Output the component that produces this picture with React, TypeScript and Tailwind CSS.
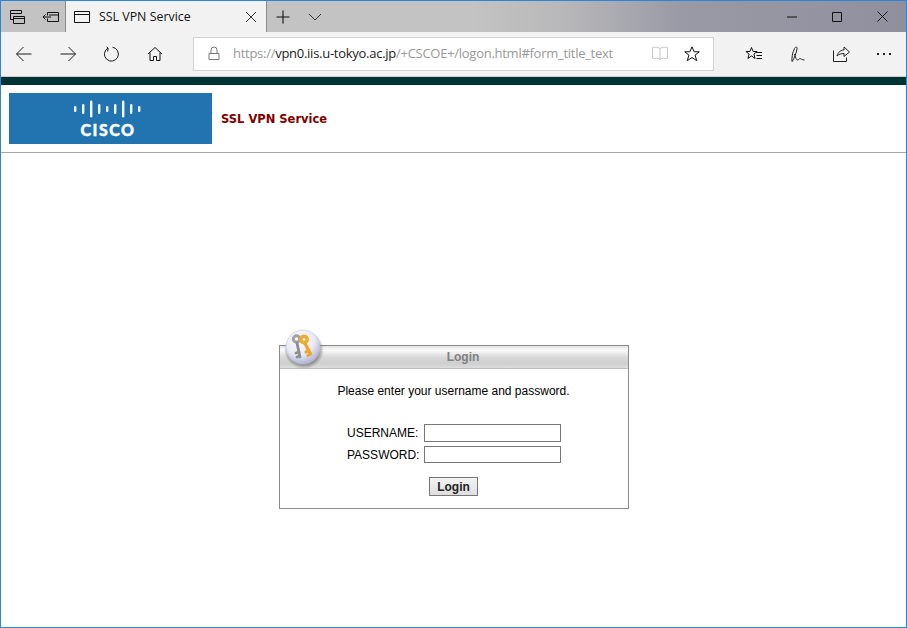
const ui = { fontFamily: '"Open Sans", "Noto Sans", sans-serif' };

function Ico({ w = 20, h = 20, children }: { w?: number; h?: number; children: React.ReactNode }) {
  return (
    <svg width={w} height={h} viewBox={`0 0 ${w} ${h}`} fill="none" stroke="currentColor" strokeWidth="1" className="shrink-0">
      {children}
    </svg>
  );
}

function CiscoLogo() {
  const bars = [6, 10, 17, 10, 6, 10, 17, 10, 6];
  return (
    <div className="w-[203px] h-[51px] bg-[#2274b0] flex flex-col items-center pt-[7px]">
      <svg width="68" height="18" viewBox="0 0 68 18" className="-ml-[8px]">
        {bars.map((h, i) => (
          <rect key={i} x={1 + i * 8} y={9 - h / 2} width="2.4" height={h} rx="1.2" fill="#fff" opacity="0.95" />
        ))}
      </svg>
      <div className="text-white font-black text-[16px] leading-[17px] tracking-[1.5px] mt-[3px] -ml-[5px] [-webkit-text-stroke:0.4px_white]" style={{ fontFamily: 'Lato, sans-serif' }}>
        CISCO
      </div>
    </div>
  );
}

function KeyBadge() {
  return (
    <svg width="42" height="42" viewBox="0 0 42 42" className="absolute left-[4px] -top-[18px]">
      <defs>
        <radialGradient id="ball" cx="0.4" cy="0.3" r="0.75">
          <stop offset="0" stopColor="#ffffff" />
          <stop offset="0.6" stopColor="#e6e8f4" />
          <stop offset="1" stopColor="#a4aacb" />
        </radialGradient>
        <radialGradient id="shade" cx="0.5" cy="0.5" r="0.5">
          <stop offset="0.7" stopColor="#555" stopOpacity="0.7" />
          <stop offset="1" stopColor="#555" stopOpacity="0" />
        </radialGradient>
      </defs>
      <ellipse cx="20" cy="22" rx="20" ry="19" fill="url(#shade)" />
      <circle cx="19" cy="19" r="17" fill="url(#ball)" stroke="#c5c8dc" strokeWidth="0.6" />
      <g fill="none" strokeLinecap="round">
        <circle cx="12.500" cy="11" r="3.200" stroke="#a2a2a2" strokeWidth="3" />
        <path d="M13 15 L16 29 M15 24 L12 25 M15.500 28 L13 29" stroke="#8d8d8d" strokeWidth="2.800" />
        <circle cx="20" cy="11.500" r="3.200" stroke="#f0ab2e" strokeWidth="3.600" />
        <path d="M21 15.500 L26.500 26 M25 22 L22 24 M26.500 26 L24 27.500" stroke="#eda52a" strokeWidth="3.200" />
      </g>
    </svg>
  );
}

export default function App() {
  return (
    <div className="w-[907px] h-[628px] border border-[#2b86d9] bg-white flex flex-col overflow-hidden" style={ui}>
      {/* title bar */}
      <div className="h-[31px] flex shrink-0 bg-[linear-gradient(90deg,#c3c3c3_0%,#c3c3c3_52%,#b8b8ba_62%,#9a9aa6_75%,#8f8f9e_100%)] text-[#111]">
        <div className="w-[65px] flex items-center pl-[6px] gap-[7px] border-r border-[#8a8a8a]">
          <Ico w={18} h={18}>
            <path d="M3.500 2.500h11v3h-11zM3.500 5.500v6h3M6.500 8.500h11v7h-11zM6.500 10.500h11" />
          </Ico>
          <span className="w-[3px]" />
          <Ico w={18} h={18}>
            <path d="M5.500 4.500h11v9h-11v-3M5.500 7.500v-3M1 9h8M3.500 6.500L1 9l2.500 2.500M7 7h9.500" />
          </Ico>
        </div>
        <div className="w-[201px] bg-[#f2f2f2] flex items-center pl-[8px] pr-[9px] border-r border-[#8a8a8a]">
          <Ico w={16} h={14}>
            <path d="M.5 1.500h15v11H.5zM.5 4.500h15" />
          </Ico>
          <span className="ml-[9px] mt-[1px] text-[12.4px] flex-1 whitespace-nowrap">SSL VPN Service</span>
          <Ico w={12} h={12}>
            <path d="M1 1l10 10M11 1L1 11" stroke="#333" />
          </Ico>
        </div>
        <div className="flex items-center pl-[9px]">
          <Ico w={14} h={14}>
            <path d="M7 .5v13M.5 7h13" stroke="#111" strokeWidth="1.1" />
          </Ico>
          <span className="w-[18px]" />
          <Ico w={14} h={10}>
            <path d="M1 2l6 6 6-6" stroke="#333" />
          </Ico>
        </div>
        <div className="flex-1" />
        <div className="flex items-center gap-[35px] pr-[18px]">
          <Ico w={10} h={2}>
            <path d="M0 1h10" />
          </Ico>
          <Ico w={10} h={10}>
            <path d="M.5.500h9v9h-9z" />
          </Ico>
          <Ico w={11} h={11}>
            <path d="M.5.500l10 10M10.500.500l-10 10" />
          </Ico>
        </div>
      </div>

      {/* toolbar */}
      <div className="h-[45px] bg-[#f2f2f2] border-b border-[#cfcfcf] flex items-center shrink-0 text-[#1c1c1c]">
        <div className="w-[192px] flex items-center pl-[15px]">
          <Ico w={16} h={16}>
            <path d="M.5 8h15M7.500 1L.5 8l7 7" />
          </Ico>
          <span className="w-[28px]" />
          <Ico w={16} h={16}>
            <path d="M.5 8h15M8.500 1l7 7-7 7" />
          </Ico>
          <span className="w-[27px]" />
          <Ico w={16} h={16}>
            <path d="M5 2A7 7 0 1 0 9.500 1.200M3.500 .8L5.200 2.200l-.6 3.300" />
          </Ico>
          <span className="w-[28px]" />
          <Ico w={16} h={16}>
            <path d="M1 8l7-6.500L15 8M3 6.500v8h3.500v-4h3v4H13v-8" stroke="#111" />
          </Ico>
        </div>
        <div className="w-[521px] h-[34px] bg-white border border-[#d2d2d2] flex items-center pl-[14px] pr-[13px] mb-[1px]">
          <Ico w={12} h={15}>
            <path d="M3 7V4a3 3 0 0 1 6 0v3M1 7.500h10v6H1z" stroke="#777" />
          </Ico>
          <span className="ml-[13px] text-[13px] tracking-[-0.27px] flex-1 whitespace-nowrap text-[#999]">
            https://<span className="text-[#222]">vpn0.iis.u-tokyo.ac.jp</span>/+CSCOE+/logon.html#form_title_text
          </span>
          <Ico w={16} h={15}>
            <path d="M8 2.500C6 1 3 1 .5 1.500v11c2.500-.5 5.500-.5 7.500 1 2-1.500 5-1.500 7.500-1v-11C13 1 10 1 8 2.500zM8 2.500v11" stroke="#c8c8c8" />
          </Ico>
          <span className="w-[16px]" />
          <Ico w={16} h={16}>
            <path d="M8 .8l2.100 5h5.200l-4.200 3.300 1.600 5.600L8 11.500l-4.700 3.200 1.600-5.600L.7 5.800h5.200z" stroke="#111" />
          </Ico>
        </div>
        <div className="flex items-center pl-[31px]">
          <Ico w={18} h={16}>
            <path d="M6.500 1.500l1.600 4h4l-3.200 2.600 1.200 4.400-3.600-2.600-3.600 2.600 1.200-4.400L.9 5.500h4zM11 6.500h6M11.500 9.500h5.500M11.500 12.500h5.500" stroke="#111" />
          </Ico>
          <span className="w-[27px]" />
          <Ico w={16} h={17}>
            <path d="M2 15.500c-.5-3 .5-9 2.500-13C5.500.5 7.500.5 7 3 6.500 7 4 12 2.300 15.500M4.500 8c1 2.500 1.500 6 3 6s1.500-1.500 2.500-1.500 1.500 1.500 4.500 1.500" stroke="#222" />
          </Ico>
          <span className="w-[27px]" />
          <Ico w={17} h={16}>
            <path d="M.5 4.500v11h13v-4M4 10c1-4 4-6 7-6V1l5.500 5L11 10.500V7.500c-3 0-5 .5-7 2.500z" stroke="#222" />
          </Ico>
          <div className="ml-[27px] flex gap-[4px]">
            <span className="w-[2px] h-[2px] bg-[#222]" />
            <span className="w-[2px] h-[2px] bg-[#222]" />
            <span className="w-[2px] h-[2px] bg-[#222]" />
          </div>
        </div>
      </div>

      {/* page */}
      <div className="h-[8px] bg-[#003333] shrink-0" />
      <div className="h-[68px] border-b border-[#a8a8a8] flex items-center pl-[8px] shrink-0">
        <CiscoLogo />
        <h1 className="ml-[9px] mt-[2px] text-[11.5px] font-bold text-[#800000]" style={{ fontFamily: '"DejaVu Sans", Verdana, sans-serif' }}>
          SSL VPN Service
        </h1>
      </div>

      <div className="flex-1 flex justify-center pt-[192px] pl-[1px]" style={{ fontFamily: '"Liberation Sans", Arial, sans-serif' }}>
        <div className="relative w-[350px] h-[164px] border border-[#8c8c8c] self-start flex flex-col">
          <KeyBadge />
          <div className="h-[23px] bg-[linear-gradient(180deg,#e4e4e4_0%,#fbfbfb_18%,#d8d8d8_52%,#cfcfcf_78%,#dcdcdc_100%)] border-b border-[#bdbdbd] text-center text-[12px] font-bold text-[#808080] leading-[22px] pl-[18px]">
            Login
          </div>
          <p className="text-[12px] text-center text-black mt-[14px] leading-[16px] -ml-[1px]">Please enter your username and password.</p>
          <div className="mt-[25px] pl-[67px] text-[12px] text-black flex flex-col gap-[4px]">
            <label className="flex items-center h-[18px]">
              <span className="w-[77px]">USERNAME:</span>
              <input className="w-[137px] h-[18px] border border-[#767676] bg-white" />
            </label>
            <label className="flex items-center h-[17px]">
              <span className="w-[77px]">PASSWORD:</span>
              <input type="password" className="w-[137px] h-[17px] border border-[#767676] bg-white" />
            </label>
          </div>
          <div className="mt-[14px] flex justify-center pr-[1px]">
            <button className="w-[49px] h-[19px] border border-[#767676] bg-[linear-gradient(180deg,#f4f4f4,#dedede)] text-[12px] font-bold text-[#222] leading-[16px]">Login</button>
          </div>
        </div>
      </div>
    </div>
  );
}
